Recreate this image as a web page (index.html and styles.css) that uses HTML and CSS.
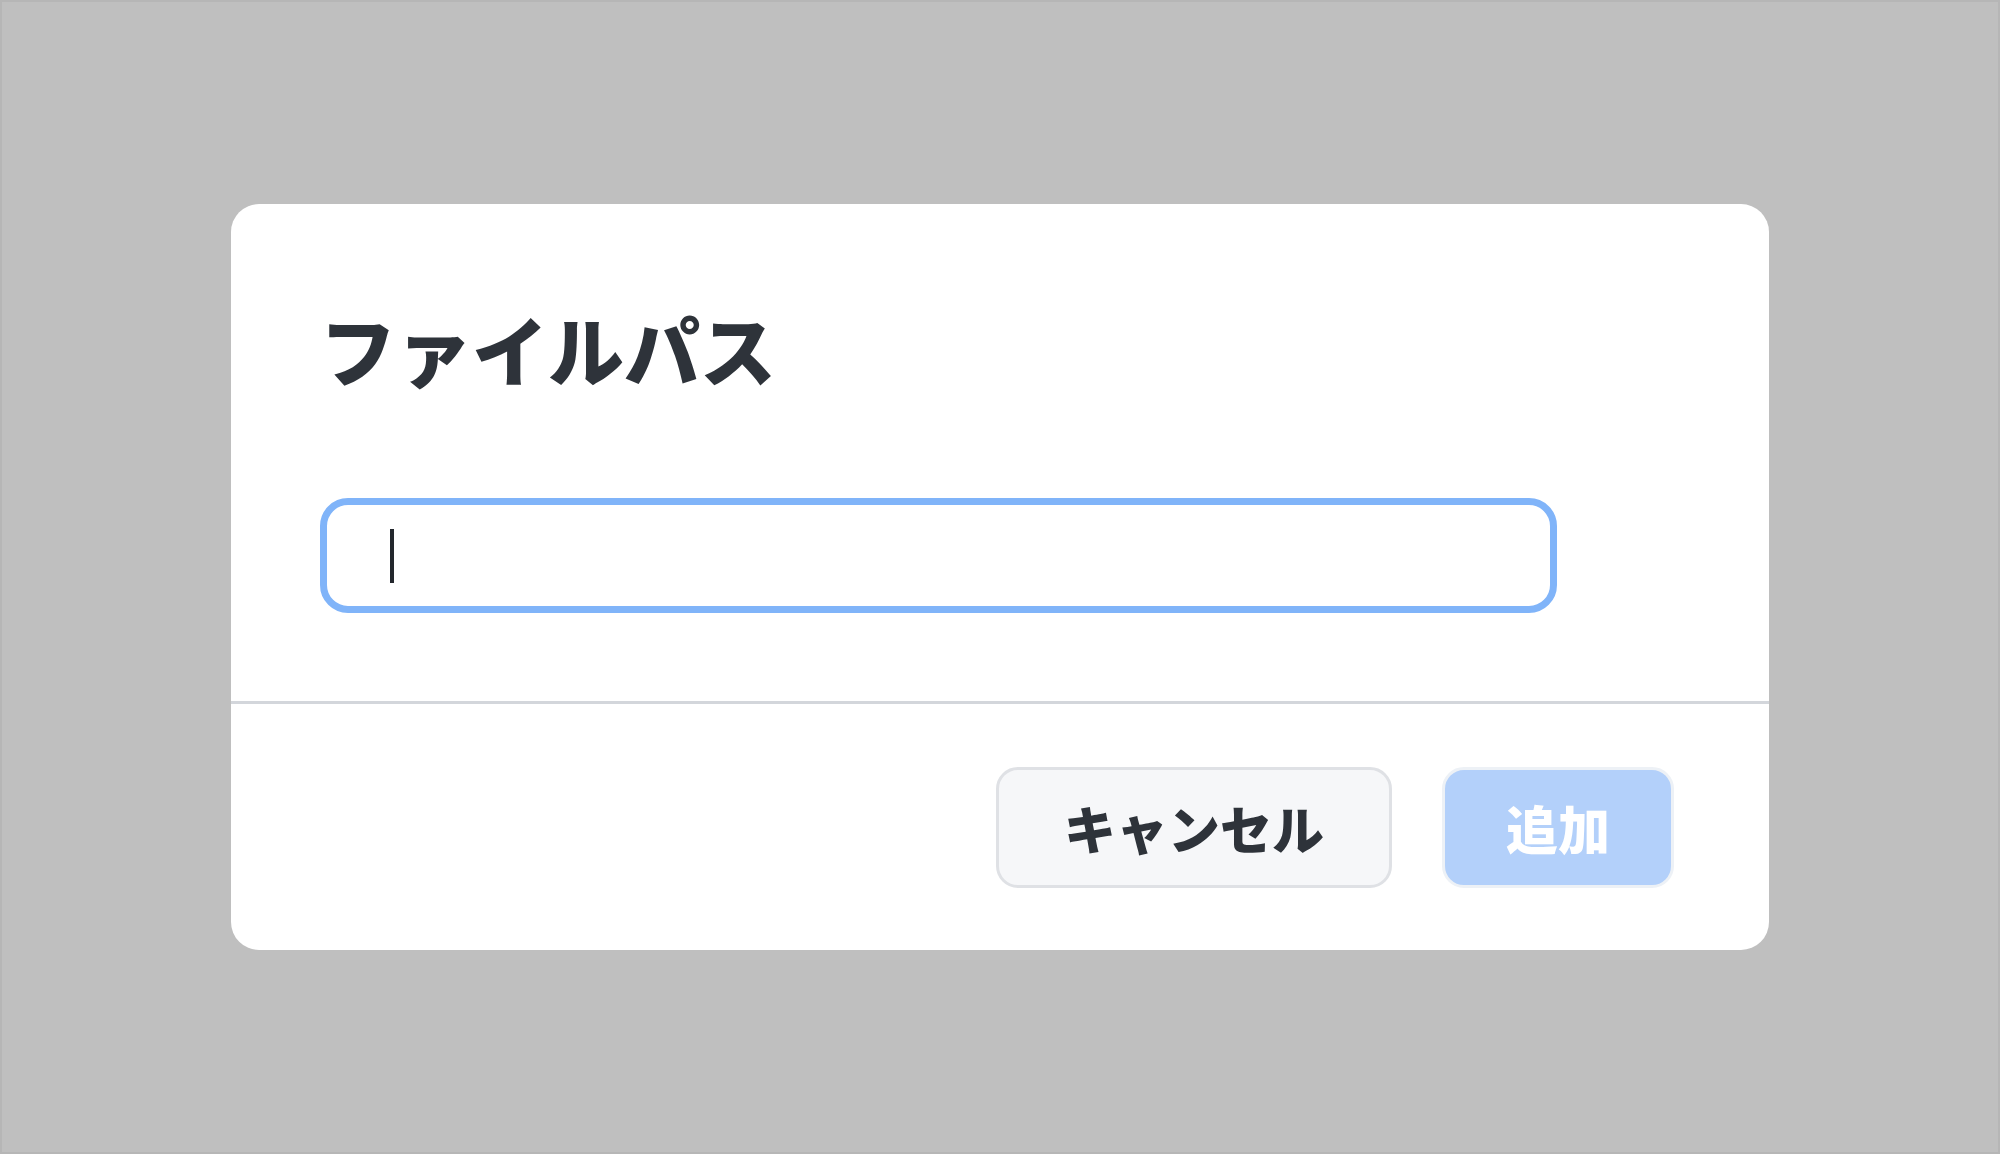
FILE: index.html
```html
<!DOCTYPE html>
<html lang="ja">
<head>
  <meta charset="UTF-8">
  <meta name="viewport" content="width=device-width, initial-scale=1.0">
  <title>ファイルパス</title>
  <link rel="stylesheet" href="styles.css">
</head>
<body>
  <div class="overlay">
    <div class="dialog">
      <div class="dialog-body">
        <h1>ファイルパス</h1>
        <div class="path-field"><span class="caret"></span></div>
      </div>
      <div class="dialog-footer">
        <button type="button" class="btn btn-cancel">キャンセル</button>
        <button type="button" class="btn btn-add" disabled>追加</button>
      </div>
    </div>
  </div>
</body>
</html>
```

FILE: styles.css
```css
* {
  box-sizing: border-box;
}
body {
  margin: 0;
  font-family: "Noto Sans CJK JP", "Noto Sans", sans-serif;
  color: #2e333a;
}
.overlay {
  width: 100vw;
  height: 100vh;
  background: #bfbfbf;
  border: 2px solid #b6b6b6;
  display: flex;
  align-items: center;
  justify-content: center;
}
.dialog {
  width: 1538px;
  height: 746px;
  background: #fff;
  border-radius: 28px;
  display: flex;
  flex-direction: column;
}
.dialog-body {
  height: 500px;
  padding: 106px 88px 0 89px;
  border-bottom: 3px solid #d3d6db;
}
h1 {
  margin: 0 0 112px;
  font-size: 76px;
  line-height: 1;
  font-weight: 900;
  letter-spacing: 0;
}
.path-field {
  width: 1237px;
  height: 115px;
  border: 7px solid #80b4f9;
  border-radius: 28px;
  padding-left: 63px;
  display: flex;
  align-items: center;
}
.caret {
  width: 4px;
  height: 54px;
  background: #23272d;
}
.dialog-footer {
  flex: 1;
  display: flex;
  align-items: center;
  justify-content: flex-end;
  gap: 50px;
  padding: 0 95px 0 0;
}
.btn {
  height: 121px;
  font-family: inherit;
  font-size: 52px;
  font-weight: 900;
  border-radius: 22px;
  cursor: pointer;
}
.btn-cancel {
  width: 396px;
  background: #f6f7f9;
  border: 3px solid #dfe1e5;
  color: #2e333a;
}
.btn-add {
  width: 232px;
  background: #b3d0fa;
  border: 3px solid #edf1f6;
  color: #fff;
}
```
